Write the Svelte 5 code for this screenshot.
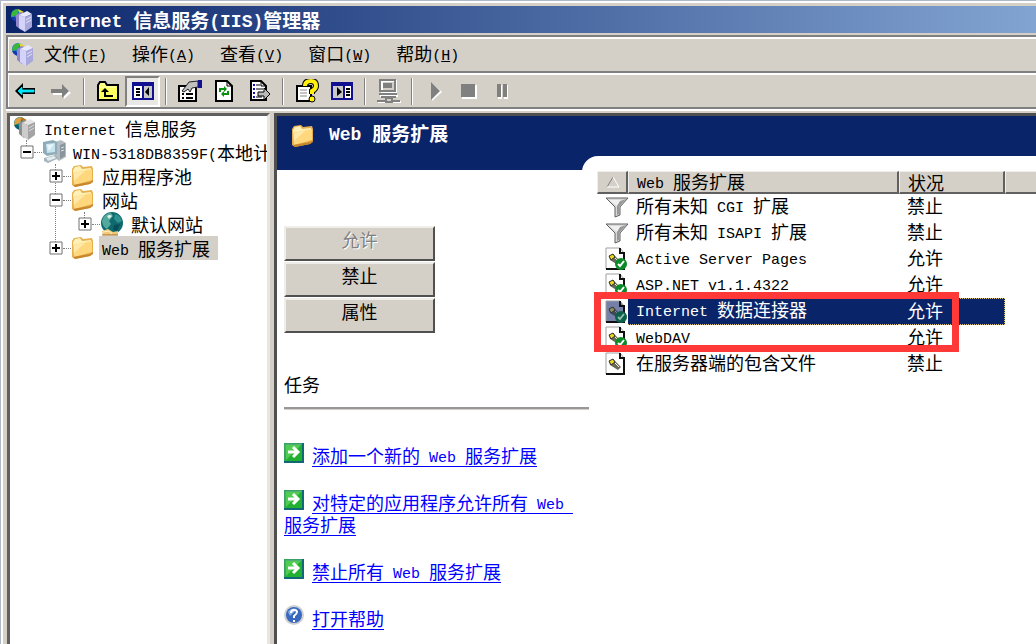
<script>
	const menus = [
		{ label: '文件', key: 'F' },
		{ label: '操作', key: 'A' },
		{ label: '查看', key: 'V' },
		{ label: '窗口', key: 'W' },
		{ label: '帮助', key: 'H' }
	]

	const tools = [
		{ icon: 'back', title: '后退' },
		{ icon: 'forward', title: '前进', disabled: true },
		null,
		{ icon: 'up', title: '向上' },
		{ icon: 'tree', title: '显示/隐藏控制台树', pressed: true },
		null,
		{ icon: 'properties', title: '属性' },
		{ icon: 'refresh', title: '刷新' },
		{ icon: 'export', title: '导出列表' },
		null,
		{ icon: 'help', title: '帮助' },
		{ icon: 'console', title: '显示/隐藏操作窗格' },
		null,
		{ icon: 'computer', title: '连接', disabled: true },
		null,
		{ icon: 'play', title: '启动', disabled: true },
		{ icon: 'stop', title: '停止', disabled: true },
		{ icon: 'pause', title: '暂停', disabled: true }
	]

	const tree = [
		{
			name: 'Internet 信息服务', icon: 'servers', children: [
				{
					name: 'WIN-5318DB8359F(本地计', icon: 'host', open: true, children: [
						{ name: '应用程序池', icon: 'folder' },
						{
							name: '网站', icon: 'folder', open: true, children: [
								{ name: '默认网站', icon: 'globe' }
							]
						},
						{ name: 'Web 服务扩展', icon: 'folder' }
					]
				}
			]
		}
	]

	const extensions = [
		{ name: '所有未知 CGI 扩展', icon: 'filter', allowed: false },
		{ name: '所有未知 ISAPI 扩展', icon: 'filter', allowed: false },
		{ name: 'Active Server Pages', icon: 'page', allowed: true },
		{ name: 'ASP.NET v1.1.4322', icon: 'page', allowed: true },
		{ name: 'Internet 数据连接器', icon: 'page', allowed: true },
		{ name: 'WebDAV', icon: 'page', allowed: true },
		{ name: '在服务器端的包含文件', icon: 'page', allowed: false }
	]

	const tasks = [
		{ name: '添加一个新的 Web 服务扩展', icon: 'go' },
		// the no-break space keeps the underline running up to the line end
		{ name: '对特定的应用程序允许所有 Web\u00a0\u200b服务扩展', icon: 'go' },
		{ name: '禁止所有 Web 服务扩展', icon: 'go' },
		{ name: '打开帮助', icon: 'info' }
	]

	let selectedNode = $state('Web 服务扩展')
	let selectedExtension = $state('Internet 数据连接器')

	const current = $derived(extensions.find(e => e.name === selectedExtension))

	// latin runs are set in a half-width face, so cut the text into runs
	const runs = text => text.split(/([\x20-\x7e\u00a0]+)/).filter(Boolean)
	const isLatin = run => /^[\x20-\x7e\u00a0]/.test(run)
</script>

{#snippet mixed(text)}{#each runs(text) as run}{#if isLatin(run)}<span class="latin">{run}</span>{:else}{run}{/if}{/each}{/snippet}

{#snippet icon(name)}
	<svg class="icon" viewBox="0 0 24 24" width="24" height="24" aria-hidden="true">
		{#if name === 'app' || name === 'servers'}
			<circle cx="7" cy="7" r="6" fill={name === 'app' ? '#2878c8' : '#16808a'} />
			<path d="M2 4Q6 0 9 2L7 7L1 9Z" fill={name === 'app' ? '#38b838' : '#e0a040'} />
			<path d="M8 1L14 4L10 6Z" fill={name === 'app' ? '#f0d828' : '#b87820'} />
			<path d="M1 9L5 9L8 14Q3 14 1 9Z" fill={name === 'app' ? '#1838b0' : '#086070'} />
			<path d="M6 7L11 4L15 6L15 19L11 22L6 18Z" fill={name === 'app' ? '#9088c8' : '#909090'} />
			<path d="M9 7L17 3L22 6L15 9Z" fill={name === 'app' ? '#e8e8ff' : '#e4e4e4'} />
			<path d="M9 7L15 9L15 24L9 20Z" fill={name === 'app' ? '#d4d4fa' : '#cccccc'} />
			<path d="M15 9L22 6L22 19L15 24Z" fill={name === 'app' ? '#a8a8dc' : '#a4a4a4'} />
			<path d="M16 12L21 9M16 15L21 12" stroke={name === 'app' ? '#e4e4ff' : '#d8d8d8'} />
		{:else if name === 'host'}
			<path d="M13 2L19 0L24 3V17L17 21L13 18Z" fill="#b4bcc2" />
			<path d="M18 5L23 3V16L18 19Z" fill="#89949c" />
			<path d="M19 8L22 7M19 11L22 10" stroke="#dce4e8" />
			<path d="M1 2L11 0L15 2V14L5 16L1 13Z" fill="#8eabb8" />
			<path d="M4 4L13 3V12L5 13Z" fill="#c8e4ee" />
			<path d="M5 5L12 4L7 11Z" fill="#e8f6fa" />
			<path d="M2 18L13 15L17 18L6 23L2 21Z" fill="#a5b4bc" />
			<path d="M4 18L12 16L14 18L6 21Z" fill="#e4ecf0" />
		{:else if name === 'folder'}
			<path d="M1 5L3 2L10 1L12 3L21 2L22 5V17L19 20L4 23L1 21Z" fill="#e6b04e" />
			<path d="M2 6L4 3L9 2L11 5L20 4V7L2 9Z" fill="#fff0b8" />
			<path d="M2 9L21 5V16L3 21Z" fill="#ffd77c" />
			<path d="M3 9L14 7L3 17Z" fill="#ffe9aa" />
			<path d="M2 21L19 18L22 16V18L19 20L4 23Z" fill="#c8862c" />
		{:else if name === 'globe'}
			<circle cx="12" cy="11" r="11" fill="#0f6a70" />
			<path d="M3 6Q6 1 11 1L13 4L9 9L11 12L7 17Q2 14 2 9Z" fill="#54a89c" />
			<path d="M15 2Q21 4 22 9L18 11L14 7Z" fill="#2f938f" />
			<path d="M14 13L20 12L17 19L13 18Z" fill="#084e58" />
			<path d="M7 4Q10 2 12 4L9 7Z" fill="#d8f2ea" />
			<path d="M2 19L8 17L13 20L18 19V23H3Z" fill="#f0c878" />
			<path d="M3 20L9 19L12 22" stroke="#fff4c8" fill="none" />
			<path d="M2 23H18" stroke="#a06820" />
		{:else if name === 'back'}
			<path d="M1 12L9 4V9H21V15H9V20Z" />
			<path d="M4 12L8 8V11H20V13H8V16Z" fill="#00e8f8" stroke="#00e8f8" stroke-width="0.8" />
		{:else if name === 'forward'}
			<path d="M4 11H15V7L22 14L15 20V16H4Z" fill="#fff" />
			<path d="M2 10H13V5L20 12L13 19V14H2Z" fill="#808080" />
		{:else if name === 'up'}
			<path d="M2 6L4 3H9L11 6H22V21H2Z" fill="#ffff60" stroke="#000" stroke-width="2" />
			<path d="M4 8H20M4 5H9" stroke="#ffffc8" />
			<path d="M9 11V17H17" fill="none" stroke="#000" stroke-width="2" />
			<path d="M5 13L9 9L13 13Z" />
		{:else if name === 'tree' || name === 'console'}
			<path d="M2 4H22V20H2Z" fill="#fff" stroke="#101090" stroke-width="2" />
			<path d="M2 3H22V7H2Z" fill="#101090" />
			{#if name === 'tree'}
				<path d="M12 7H21V19H12Z" fill="#c8c8c8" />
				<path d="M12 6V20" stroke="#101090" stroke-width="2" />
				<path d="M5 10H9M5 13H9M5 16H9" stroke="#000" stroke-width="2" />
				<path d="M18 8V17L14 13Z" />
			{:else}
				<path d="M3 7H13V19H3Z" fill="#c8c8c8" />
				<path d="M14 6V20" stroke="#101090" stroke-width="2" />
				<path d="M16 10H20M16 13H20M16 16H20" stroke="#000" stroke-width="2" />
				<path d="M7 8V17L12 13Z" />
			{/if}
		{:else if name === 'properties'}
			<path d="M1 7H18V22H1Z" fill="#fff" stroke="#000" stroke-width="2" />
			<path d="M4 15H6M8 15H15M4 19H6M8 19H15" stroke="#000" stroke-width="2" />
			<path d="M4 12L8 7L11 3L20 2V8L14 9L12 13L10 10L6 13Z" fill="#c0c0c0" stroke="#202020" />
			<path d="M20 1H24V9H20Z" fill="#101090" />
		{:else if name === 'refresh'}
			<path d="M3 2H14L19 7V22H3Z" fill="#fff" stroke="#000" stroke-width="2" />
			<path d="M14 2V7H19" fill="none" stroke="#000" />
			<path d="M7 13V10H11M15 12V15H11" fill="none" stroke="#089010" stroke-width="2" />
			<path d="M11 7L14 10L11 13ZM11 12L8 15L11 18Z" fill="#089010" />
		{:else if name === 'export'}
			<path d="M3 2H13L18 7V21H3Z" fill="#fff" stroke="#000" stroke-width="2" />
			<path d="M13 2V7H18" fill="none" stroke="#000" />
			<path d="M5 6H7M5 10H7M5 14H7M5 18H7" stroke="#1010b0" stroke-width="2" />
			<path d="M8 6H12M8 10H15M8 18H14" stroke="#000" />
			<path d="M10 13H16V9L22 15L16 21V17H10Z" fill="#b8b8b8" stroke="#000" />
		{:else if name === 'help'}
			<path d="M2 7H16V22H2Z" fill="#fff" stroke="#000" stroke-width="2" />
			<path d="M5 11H12M5 14H12M5 17H12" stroke="#888" />
			<path d="M10 7Q10 2 16 2Q21 2 21 7Q21 10 17 12V15" fill="none" stroke="#000" stroke-width="6" />
			<path d="M10 7Q10 2 16 2Q21 2 21 7Q21 10 17 12V15" fill="none" stroke="#fff010" stroke-width="4" />
			<circle cx="17" cy="20" r="3" fill="#fff010" stroke="#000" />
		{:else if name === 'computer'}
			<g fill="none" stroke="#fff" stroke-width="2" transform="translate(1 1)">
				<path d="M4 1H18V12H4ZM2 16H20M0 22H23" />
			</g>
			<g fill="none" stroke="#808080" stroke-width="2">
				<path d="M3 1H18V12H3ZM2 15H20M4 18H19M0 22H8M14 22H23M9 19H15V23H9Z" />
			</g>
			<path d="M6 4H15V9H6Z" fill="#808080" />
		{:else if name === 'play'}
			<path d="M8 4L18 13L8 22Z" fill="#fff" />
			<path d="M7 3L16 12L7 21Z" fill="#808080" />
		{:else if name === 'stop'}
			<path d="M3 6H18V20H3Z" fill="#fff" />
			<path d="M2 5H16V18H2Z" fill="#808080" />
		{:else if name === 'pause'}
			<path d="M4 6H8V20H4ZM10 6H14V20H10Z" fill="#fff" />
			<path d="M3 5H7V18H3ZM9 5H13V18H9Z" fill="#808080" />
		{:else if name === 'filter'}
			<path d="M1 3H23L15 12V20L10 22V12Z" fill="#d8d8d8" stroke="#606060" />
			<path d="M4 5H18L12 11Z" fill="#f0f0f0" />
			<path d="M14 12L21 4L15 6L12 11V20L14 19Z" fill="#989898" />
		{:else if name === 'go'}
			<path d="M2 2H22V22H2Z" fill="#22b030" />
			<path d="M3 3H20L4 19Z" fill="#50cc50" />
			<path d="M3 22V3H22" fill="none" stroke="#5090a0" />
			<path d="M2 21H21V2" fill="none" stroke="#106878" stroke-width="2" />
			<path d="M6 11H16M11 6L16 11L11 16" fill="none" stroke="#fff" stroke-width="3" />
		{:else if name === 'info'}
			<circle cx="12" cy="11" r="10" fill="#d0d0d0" />
			<circle cx="12" cy="11" r="8" fill="#3868c0" />
			<path d="M6 8Q9 3 15 5L8 12Z" fill="#88b0e8" />
			<path d="M9 9Q9 6 12 6Q15 6 15 8Q15 10 12 12V14M12 16V18" fill="none" stroke="#fff" stroke-width="2" />
		{/if}
	</svg>
{/snippet}

{#snippet page(allowed, selected)}
	<svg class="icon" viewBox="0 0 24 24" width="24" height="24" aria-hidden="true">
		<path d="M1 1H15L19 6V22H1Z" fill={selected ? '#7480a8' : '#fff'} stroke="#a0a0a0" />
		<path d="M15 1V6H19V22H1" fill="none" stroke="#101010" stroke-width="2" />
		<path d="M4 9L8 7L16 15L13 18L5 13Z" fill={selected ? '#404860' : '#686858'} />
		<path d="M4 9L8 7L10 10L6 13Z" fill={selected ? '#90905c' : '#e8d820'} stroke="#303030" />
		<path d="M10 11L14 15" stroke={selected ? '#808890' : '#f0f0e0'} />
		{#if allowed}
			<circle cx="16" cy="17" r="6" fill={selected ? '#0b6048' : '#0b8a28'} />
			<path d="M13 17L15 19L19 14" fill="none" stroke={selected ? '#90b8b0' : '#fff'} stroke-width="2" />
		{/if}
	</svg>
{/snippet}

{#snippet nodes(items, depth)}
	<ul class:root={depth === 0} class:first={depth === 1}>
		{#each items as item}
			<li>
				<div class="node">
					{#if depth > 0}
						<button class="expander" aria-label={item.open ? '折叠' : '展开'}>
							<svg viewBox="0 0 14 14" width="14" height="14">
								<path d="M1 1H13V13H1Z" fill="#fff" stroke="#707070" />
								<path d={item.open ? 'M3 7H11' : 'M3 7H11M7 3V11'} stroke="#000" stroke-width="2" />
							</svg>
						</button>
						<span class="dots"></span>
					{/if}
					{@render icon(item.icon)}
					<button class="name" class:selected={item.name === selectedNode} onclick={() => selectedNode = item.name}>{@render mixed(item.name)}</button>
				</div>
				{#if item.children}
					{@render nodes(item.children, depth + 1)}
				{/if}
			</li>
		{/each}
	</ul>
{/snippet}

<div class="window">
	<header class="title">
		{@render icon('app')}
		<h1>{@render mixed('Internet 信息服务(IIS)管理器')}</h1>
	</header>

	<nav class="menubar">
		{@render icon('app')}
		{#each menus as menu}
			<button>{menu.label}<span class="latin">(<u>{menu.key}</u>)</span></button>
		{/each}
	</nav>

	<div class="toolbar">
		{#each tools as tool}
			{#if tool}
				<button class:pressed={tool.pressed} disabled={tool.disabled} aria-label={tool.title}>
					{@render icon(tool.icon)}
				</button>
			{:else}
				<span class="separator"></span>
			{/if}
		{/each}
	</div>

	<main>
		<aside class="tree">
			{@render nodes(tree, 0)}
		</aside>

		<section class="content">
			<div class="banner">
				{@render icon('folder')}
				<h2>{@render mixed('Web 服务扩展')}</h2>
			</div>
			<div class="body">
				<div class="side">
					<div class="actions">
						<button disabled={current.allowed}>允许</button>
						<button disabled={!current.allowed}>禁止</button>
						<button>属性</button>
					</div>
					<h3>任务</h3>
					<hr />
					{#each tasks as task}
						<p>{@render icon(task.icon)}<a href="#task">{@render mixed(task.name)}</a></p>
					{/each}
				</div>

				<div class="list">
					<table>
						<colgroup>
							<col class="col-icon" />
							<col class="col-name" />
							<col class="col-status" />
							<col />
						</colgroup>
						<thead>
							<tr>
								<th aria-label="排序">
									<svg viewBox="0 0 14 12" width="14" height="12">
										<path d="M7 1L1 11" stroke="#808080" />
										<path d="M7 1L13 11H1" fill="none" stroke="#fff" />
									</svg>
								</th>
								<th>{@render mixed('Web 服务扩展')}</th>
								<th>状况</th>
								<th></th>
							</tr>
						</thead>
						<tbody>
							{#each extensions as item}
								<tr class:selected={item.name === selectedExtension} onclick={() => selectedExtension = item.name}>
									<td>
										{#if item.icon === 'page'}
											{@render page(item.allowed, item.name === selectedExtension)}
										{:else}
											{@render icon(item.icon)}
										{/if}
									</td>
									<td>{@render mixed(item.name)}</td>
									<td>{item.allowed ? '允许' : '禁止'}</td>
									<td></td>
								</tr>
							{/each}
						</tbody>
					</table>
					<div class="marker"></div>
				</div>
			</div>
		</section>
	</main>
</div>

<style>
	:global(body) {
		background: #d4d0c8;
		overflow: hidden;
	}

	.window {
		box-sizing: border-box;
		display: flex;
		flex-direction: column;
		height: 100vh;
		padding: 3px 0 0 3px;
		border: solid #b0b8c8;
		border-width: 1px 0 0 1px;
		box-shadow: inset 2px 2px #fff;
		background: #d4d0c8;
		color: #000;
		font: 18px/22px "Noto Sans CJK SC", sans-serif;
		white-space: nowrap;
	}

	.window > * {
		margin-left: 2px;
	}

	.latin {
		font-family: "Liberation Mono", monospace;
		font-size: 15px;
		line-height: 1;
		vertical-align: 1px;
		white-space: pre;
	}

	h1, h2, h3, p, ul {
		margin: 0;
		padding: 0;
	}

	button {
		padding: 0;
		border: none;
		background: none;
		color: inherit;
		font: inherit;
	}

	.icon {
		display: block;
		flex: none;
	}

	.title {
		display: flex;
		align-items: center;
		height: 27px;
		margin-top: 2px;
		padding-left: 4px;
		background: linear-gradient(to right, #0a246a, #82a4d2);
		color: #fff;
	}

	h1, h2 {
		font-size: 19px;
		line-height: 24px;
	}

	h1 {
		padding-left: 2px;
	}

	h1 .latin, h2 .latin {
		font-size: 18px;
	}

	.menubar {
		display: flex;
		align-items: center;
		height: 34px;
		margin-top: 2px;
		padding-left: 3px;
		border: 2px solid #808080;
		border-right: none;
		box-shadow: inset 1px 2px #fff;
	}

	.menubar button {
		margin-left: 9px;
		margin-right: 16px;
		padding-bottom: 2px;
	}

	.toolbar {
		display: flex;
		align-items: center;
		height: 32px;
		border: solid #808080;
		border-width: 0 0 2px 2px;
		box-shadow: inset 1px 2px #fff;
		padding-top: 2px;
	}

	.toolbar button {
		display: flex;
		align-items: center;
		justify-content: center;
		box-sizing: border-box;
		width: 35px;
		height: 31px;
	}

	.toolbar .pressed {
		border: 2px solid;
		border-color: #808080 #fff #fff #808080;
		background: #eae8e4;
	}

	.separator {
		width: 2px;
		height: 27px;
		margin: 0 5px;
		background: linear-gradient(to right, #808080 50%, #fff 50%);
	}

	main {
		flex: 1;
		display: flex;
		gap: 4px;
		min-height: 0;
		padding: 2px 0 0 1px;
		border-top: 2px solid #fff;
	}

	.tree {
		flex: none;
		box-sizing: border-box;
		width: 263px;
		border: 3px solid #606060;
		border-right-color: #e8e6e0;
		border-bottom: none;
		background: #fff;
		overflow: hidden;
	}

	ul {
		position: relative;
		margin-left: 29px;
		list-style: none;
	}

	ul.root {
		margin-left: 0;
	}

	ul.first {
		margin-left: 10px;
	}

	ul.root > li > .node {
		padding-left: 3px;
	}

	ul:not(.root)::before {
		content: "";
		position: absolute;
		top: 0;
		bottom: 12px;
		left: 6px;
		border-left: 1px dotted #808080;
	}

	ul.first::before {
		bottom: auto;
		height: 12px;
	}

	.node {
		display: flex;
		align-items: center;
		height: 24px;
	}

	.expander {
		position: relative;
		display: block;
		flex: none;
		width: 14px;
		height: 14px;
	}

	.expander svg {
		display: block;
	}

	.dots {
		flex: none;
		width: 8px;
		border-top: 1px dotted #808080;
	}

	.name {
		flex: none;
		margin-left: 4px;
		padding: 0 8px 0 3px;
		line-height: 24px;
	}

	.name.selected {
		background: #d4d0c8;
	}

	.content {
		flex: 1;
		display: flex;
		flex-direction: column;
		min-width: 0;
		border: solid #505050;
		border-width: 3px 0 0 3px;
		background: #fff;
	}

	.banner {
		display: flex;
		align-items: center;
		gap: 14px;
		height: 40px;
		padding-left: 14px;
		background: #0a246a;
		color: #fff;
	}

	.banner h2 {
		padding-bottom: 6px;
	}

	/* the navy strip behind the list shows only at its rounded corner */
	.body {
		flex: 1;
		display: flex;
		min-height: 0;
		background: linear-gradient(#0a246a 14px, #fff 14px);
	}

	.side {
		position: relative;
		z-index: 1;
		box-sizing: border-box;
		flex: none;
		width: 312px;
		padding: 70px 0 0 7px;
	}

	.actions {
		display: flex;
		flex-direction: column;
		gap: 1px;
		width: 151px;
	}

	.actions button {
		height: 35px;
		padding-bottom: 9px;
		border: 2px solid;
		border-color: #f0eeea #505050 #505050 #f0eeea;
		background: #d4d0c8;
	}

	.actions button:disabled {
		color: #808080;
		text-shadow: 1px 1px #fff;
	}

	h3 {
		margin-top: 40px;
		font-size: 18px;
		font-weight: normal;
	}

	hr {
		height: 2px;
		margin: 12px 0 34px;
		border: none;
		border-bottom: 1px solid #d4d0c8;
		background: #989898;
	}

	p {
		margin-bottom: 25px;
		line-height: 22px;
		white-space: normal;
	}

	/* negative block margins keep the icon from stretching its line */
	p .icon {
		display: inline-block;
		margin: -4px 6px -4px -2px;
		vertical-align: 2px;
	}

	a {
		color: #0000ff;
		text-decoration: underline;
		text-underline-offset: 3px;
	}

	.list {
		position: relative;
		flex: 1;
		min-width: 0;
		margin-left: -7px;
		padding: 15px 0 0 15px;
		border-top-left-radius: 16px;
		background: #fff;
	}

	table {
		width: 100%;
		table-layout: fixed;
		border-collapse: separate;
		border-spacing: 0;
	}

	.col-icon {
		width: 31px;
	}

	.col-name {
		width: 271px;
	}

	.col-status {
		width: 106px;
	}

	th, td {
		box-sizing: border-box;
		padding: 0 0 0 8px;
		vertical-align: middle;
	}

	th {
		height: 22px;
		border: solid;
		border-width: 1px 2px 2px 1px;
		border-color: #f0eeea #606060 #606060 #f0eeea;
		background: #d4d0c8;
		font-weight: normal;
		line-height: 18px;
		text-align: left;
	}

	th svg {
		display: block;
	}

	th:last-child {
		border-right: none;
	}

	td {
		height: 26px;
		padding-bottom: 4px;
		line-height: 20px;
	}

	td:first-child {
		padding-bottom: 0;
	}

	tr.selected td:nth-child(2),
	tr.selected td:nth-child(3) {
		border: 1px dotted #e0c878;
		border-width: 1px 0;
		background: #0a246a;
		color: #fff;
	}

	tr.selected td:nth-child(3) {
		border-right-width: 1px;
	}

	/* annotation frame over two of the rows */
	.marker {
		position: absolute;
		top: 136px;
		left: 12px;
		box-sizing: border-box;
		width: 365px;
		height: 60px;
		border: 7px solid #ff3838;
		pointer-events: none;
	}
</style>
